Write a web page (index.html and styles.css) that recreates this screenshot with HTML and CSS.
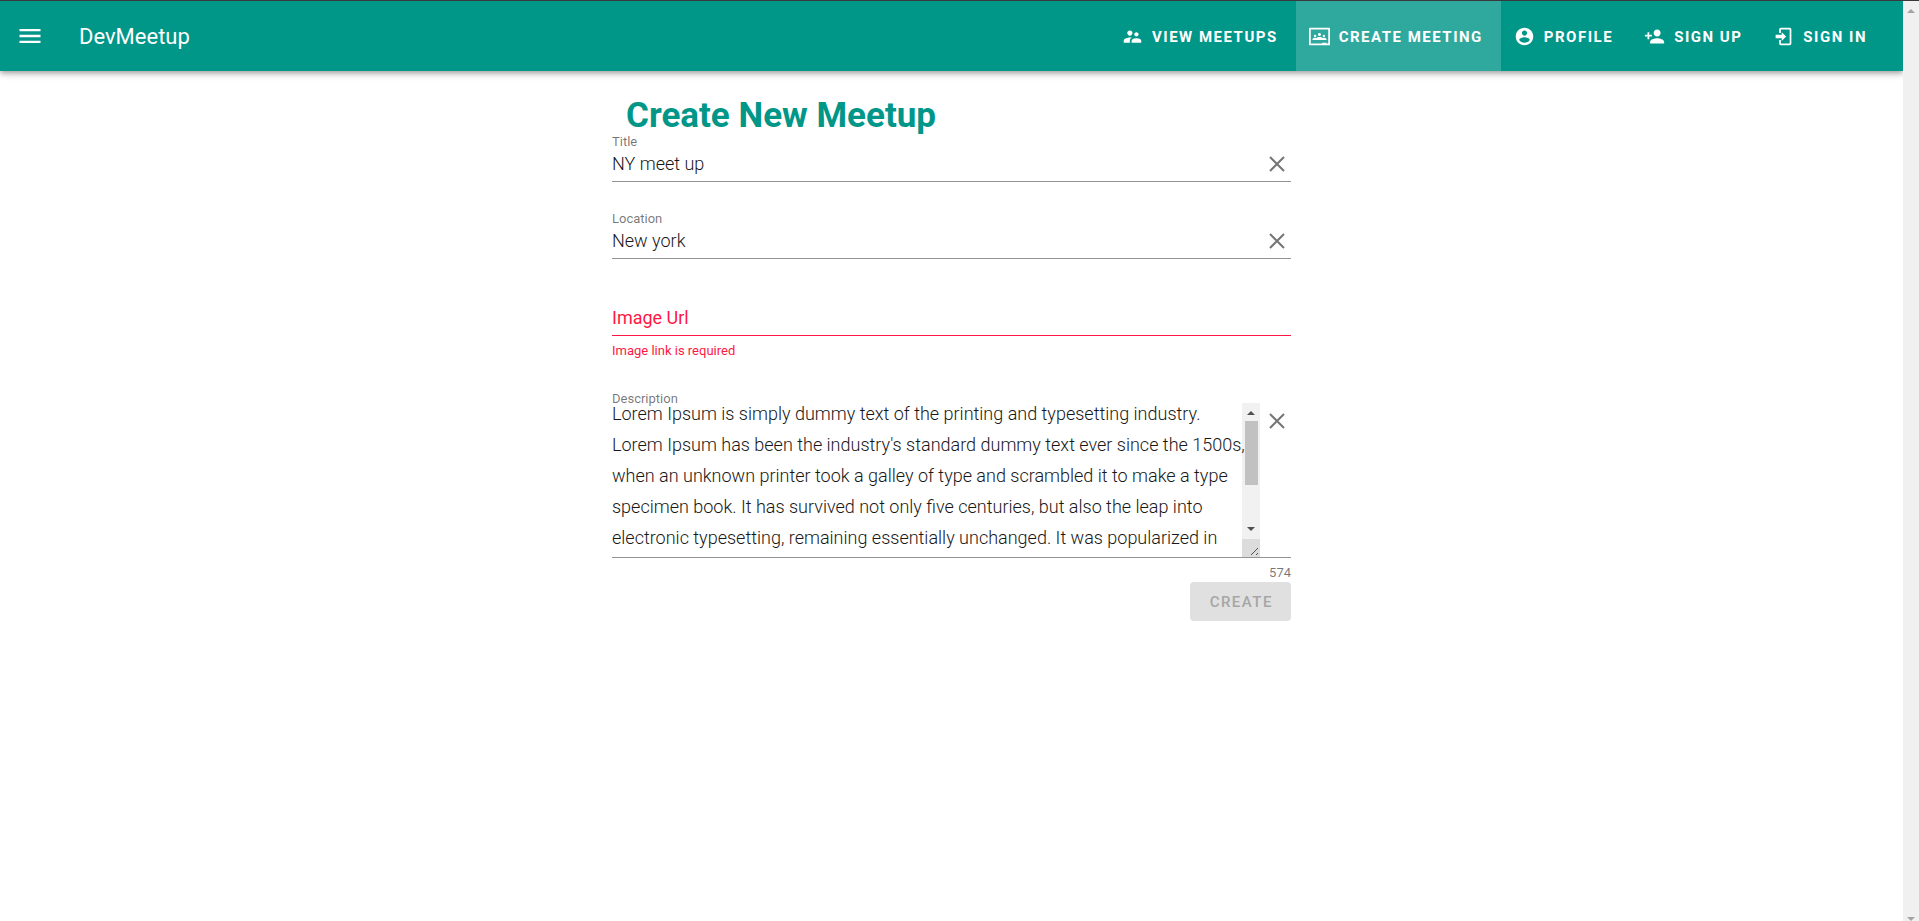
FILE: index.html
```html
<!DOCTYPE html>
<html lang="en">
<head>
<meta charset="utf-8">
<title>DevMeetup</title>
<meta name="viewport" content="width=device-width, initial-scale=1">
<link rel="stylesheet" href="styles.css">
</head>
<body>
<div class="page">
  <header class="toolbar">
    <button class="menu" type="button" aria-label="Menu"><svg class="menu-icon" viewBox="0 0 24 24"><path d="M3 6h18v2H3zM3 11h18v2H3zM3 16h18v2H3z"/></svg></button>
    <a class="brand" href="#">DevMeetup</a>
    <nav class="nav">
      <a class="nav-item" href="#"><svg class="icon" viewBox="0 0 24 24"><path d="M16.5 12c1.38 0 2.49-1.12 2.49-2.5S17.88 7 16.5 7 14 8.12 14 9.5s1.12 2.500 2.500 2.500zM9 11c1.660 0 2.990-1.340 2.990-3S10.660 5 9 5 6 6.340 6 8s1.340 3 3 3zm7.500 3c-1.830 0-5.500.92-5.500 2.750V19h11v-2.250c0-1.830-3.670-2.750-5.500-2.750zM9 13c-2.330 0-7 1.170-7 3.500V19h7v-2.250c0-.85.33-2.340 2.370-3.470C10.500 13.100 9.660 13 9 13z"/></svg>VIEW MEETUPS</a>
      <a class="nav-item active" href="#" aria-current="page"><svg class="icon" viewBox="0 0 24 24"><path d="M23 2H1a1 1 0 0 0-1 1v18a1 1 0 0 0 1 1h22a1 1 0 0 0 1-1V3a1 1 0 0 0-1-1m-1 18h-2v-1h-5v1H2V4h20v16M10.290 9.710A1.710 1.710 0 0 1 12 8c.95 0 1.710.77 1.710 1.710 0 .95-.76 1.720-1.710 1.720s-1.710-.77-1.710-1.720m-4.580 1.580c0-.71.58-1.290 1.290-1.290s1.290.58 1.290 1.290c0 .71-.58 1.280-1.290 1.280s-1.290-.57-1.290-1.280m10 0A1.290 1.290 0 0 1 17 10a1.290 1.290 0 0 1 1.290 1.290c0 .71-.58 1.280-1.290 1.280s-1.290-.57-1.290-1.280M20 15.140V16H4v-.86c0-.94 1.550-1.710 3-1.710.55 0 1.110.11 1.600.3.750-.69 2.100-1.160 3.400-1.160s2.650.47 3.400 1.160c.49-.19 1.050-.3 1.600-.3 1.450 0 3 .77 3 1.710z"/></svg>CREATE MEETING</a>
      <a class="nav-item" href="#"><svg class="icon" viewBox="0 0 24 24"><path d="M12 2C6.480 2 2 6.480 2 12s4.480 10 10 10 10-4.480 10-10S17.520 2 12 2zm0 3c1.660 0 3 1.340 3 3s-1.340 3-3 3-3-1.340-3-3 1.340-3 3-3zm0 14.200c-2.500 0-4.710-1.280-6-3.220.03-1.990 4-3.080 6-3.080 1.990 0 5.970 1.090 6 3.080-1.290 1.940-3.500 3.220-6 3.220z"/></svg>PROFILE</a>
      <a class="nav-item" href="#"><svg class="icon" viewBox="0 0 24 24"><path d="M15 12c2.210 0 4-1.790 4-4s-1.790-4-4-4-4 1.790-4 4 1.790 4 4 4zm-9-2V7H4v3H1v2h3v3h2v-3h3v-2H6zm9 4c-2.670 0-8 1.340-8 4v2h16v-2c0-2.660-5.330-4-8-4z"/></svg>SIGN UP</a>
      <a class="nav-item" href="#"><svg class="icon" viewBox="0 0 24 24"><path d="M19 2H9a2 2 0 0 0-2 2v4h2V4h10v16H9v-4H7v4a2 2 0 0 0 2 2h10a2 2 0 0 0 2-2V4a2 2 0 0 0-2-2zM10 17v-3H3v-4h7V7l5 5z"/></svg>SIGN IN</a>
    </nav>
  </header>

  <main class="content">
    <h1 class="heading">Create New Meetup</h1>
    <form class="form">
      <div class="field">
        <label class="label" for="title">Title</label>
        <div class="control">
          <input class="input" id="title" type="text" value="NY meet up">
          <button class="clear" type="button" aria-label="Clear title"><svg class="clear-icon" viewBox="0 0 16 16"><path d="M1 1l14 14M15 1L1 15"/></svg></button>
        </div>
      </div>
      <div class="field">
        <label class="label" for="location">Location</label>
        <div class="control">
          <input class="input" id="location" type="text" value="New york">
          <button class="clear" type="button" aria-label="Clear location"><svg class="clear-icon" viewBox="0 0 16 16"><path d="M1 1l14 14M15 1L1 15"/></svg></button>
        </div>
      </div>
      <div class="field invalid">
        <div class="control">
          <input class="input" id="image" type="text" aria-describedby="image-error">
          <label class="floating" for="image">Image Url</label>
        </div>
        <p class="message" id="image-error">Image link is required</p>
      </div>
      <div class="field area">
        <label class="label" for="description">Description</label>
        <div class="control">
          <textarea class="textarea" id="description">Lorem Ipsum is simply dummy text of the printing and typesetting industry. Lorem Ipsum has been the industry's standard dummy text ever since the 1500s, when an unknown printer took a galley of type and scrambled it to make a type specimen book. It has survived not only five centuries, but also the leap into electronic typesetting, remaining essentially unchanged. It was popularized in the 1960s with the release of Letraset sheets containing Lorem Ipsum passages, and more recently with desktop publishing software like Aldus PageMaker including versions of Lorem Ipsum.</textarea>
          <div class="area-scroll" aria-hidden="true">
            <svg class="arrow" viewBox="0 0 18 18"><path d="M5 12l4-4 4 4z"/></svg>
            <span class="thumb"></span>
            <svg class="arrow" viewBox="0 0 18 18"><path d="M5 6l4 4 4-4z"/></svg>
            <svg class="grip" viewBox="0 0 18 18"><path d="M9 16l7-7M14 16l2-2"/></svg>
          </div>
          <button class="clear" type="button" aria-label="Clear description"><svg class="clear-icon" viewBox="0 0 16 16"><path d="M1 1l14 14M15 1L1 15"/></svg></button>
        </div>
        <p class="counter">574</p>
      </div>
      <button class="create" type="submit" disabled>CREATE</button>
    </form>
  </main>
</div>
<div class="page-scroll" aria-hidden="true">
  <svg class="page-arrow" viewBox="0 0 16 16"><path d="M4 12l4-4 4 4z"/></svg>
  <svg class="page-arrow" viewBox="0 0 16 16"><path d="M4 12l4 4 4-4z"/></svg>
</div>
</body>
</html>
```

FILE: styles.css
```css
*, *::before, *::after { box-sizing: border-box; }

body {
  margin: 0;
  min-height: 100vh;
  display: flex;
  border-top: 1px solid #37393c;
  background: #fff;
  color: #181818;
  font-family: Roboto, "Liberation Sans", sans-serif;
  font-size: 18px;
}

button, input, textarea { font: inherit; color: inherit; }
button { border: 0; padding: 0; background: none; }
p, h1 { margin: 0; }

.page { flex: 1; min-width: 0; }

.toolbar {
  display: flex;
  align-items: center;
  height: 70px;
  padding-right: 18px;
  background: #009688;
  color: #fff;
  box-shadow: 0 2px 4px -1px rgba(0, 0, 0, 0.2), 0 4px 5px rgba(0, 0, 0, 0.14), 0 1px 10px rgba(0, 0, 0, 0.12);
}
.toolbar a { color: inherit; text-decoration: none; }
.menu { width: 60px; height: 60px; display: grid; place-items: center; }
.menu-icon { width: 28px; height: 28px; fill: currentColor; display: block; }
.brand { margin-left: 19px; font-size: 22px; }

.nav { display: flex; align-self: stretch; margin-left: auto; }
.nav-item {
  display: flex;
  align-items: center;
  gap: 9px;
  padding: 1px 18px 0 13px;
  font-size: 15px;
  font-weight: 700;
  letter-spacing: 0.1em;
  white-space: nowrap;
}
.nav-item.active { background: #2fa99e; }
.icon { flex: none; width: 21px; height: 21px; fill: currentColor; }

.content { max-width: 679px; margin: 0 auto; padding: 26px 0; }
.heading {
  padding-left: 14px;
  color: #009688;
  font-size: 35px;
  line-height: 37px;
  font-weight: 700;
}

.field { padding-bottom: 29px; }
.label {
  display: block;
  color: rgba(0, 0, 0, 0.54);
  font-size: 13px;
  line-height: 16px;
}
.control {
  position: relative;
  display: flex;
  border-bottom: 1px solid #949494;
}
.input {
  flex: 1;
  min-width: 0;
  height: 31px;
  padding: 0 0 4px;
  border: 0;
  outline: 0;
  background: none;
  font-weight: 300;
}
.clear { width: 28px; height: 28px; padding-right: 1px; display: grid; place-items: center; }
.clear-icon { width: 16px; height: 16px; fill: none; stroke: #757575; stroke-width: 2; }

.invalid { padding: 16px 0 17px; color: #ff1744; }
.invalid .control { border-color: #ff1744; }
.floating { position: absolute; left: 0; top: 3px; line-height: 22px; }
.message { padding: 7px 0 15px; font-size: 13px; line-height: 16px; }

.area { padding: 0; }
.area .label { margin-bottom: -4px; }
.textarea {
  z-index: 1;
  flex: 1;
  min-width: 0;
  height: 159px;
  margin: -5px -4px 0 0;
  padding: 0;
  border: 0;
  outline: 0;
  background: none;
  resize: none;
  overflow: hidden;
  font-weight: 300;
  line-height: 31px;
}
.area .control { height: 155px; }
.area .clear { margin-left: 3px; margin-top: 4px; }
.area-scroll {
  display: flex;
  flex-direction: column;
  width: 18px;
  background: #f1f1f1;
}
.arrow { width: 18px; height: 18px; fill: #505050; }
.thumb { height: 64px; margin: 0 2px 36px 3px; background: #c1c1c1; }
.grip { width: 18px; height: 18px; background: #dcdcdc; fill: none; stroke: #505050; stroke-width: 1; }
.counter {
  padding-top: 7px;
  color: rgba(0, 0, 0, 0.54);
  font-size: 13px;
  line-height: 16px;
  text-align: right;
}

.form { display: flex; flex-direction: column; }
.create {
  align-self: flex-end;
  margin-top: 1px;
  height: 39px;
  padding: 0 18px 0 20px;
  border-radius: 4px;
  background: #e0e0e0;
  color: #a6a6a6;
  font-size: 15px;
  font-weight: 500;
  letter-spacing: 0.1em;
}

.page-scroll {
  display: flex;
  flex-direction: column;
  justify-content: space-between;
  width: 16px;
  background: #f0f0f0;
}
.page-arrow { width: 16px; height: 16px; fill: #a3a3a3; }
```
